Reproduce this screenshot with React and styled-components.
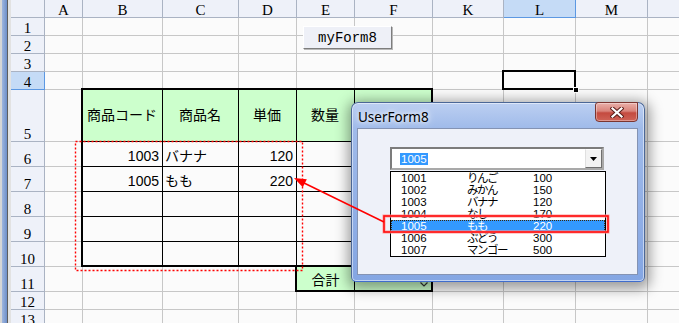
import React from 'react';
import styled, { createGlobalStyle, css } from 'styled-components';

const GlobalStyle = createGlobalStyle`
  *, *::before, *::after { box-sizing: border-box; }
  html, body { margin: 0; padding: 0; background: #fbfbfb; overflow: hidden; }
`;

const COLUMNS = ['A', 'B', 'C', 'D', 'E', 'F', 'K', 'L', 'M', ''];
const ROW_COUNT = 13;

// F5 sits under the dialog, so it stays empty here
const HEAD = ['商品コード', '商品名', '単価', '数量', ''];
const BODY = [
  ['1003', 'バナナ', '120', '', ''],
  ['1005', 'もも', '220', '', ''],
  ['', '', '', '', ''],
  ['', '', '', '', ''],
  ['', '', '', '', ''],
];
const ALIGN = ['right', 'left', 'right', 'right', 'right'];

const ITEMS = [
  ['1001', 'りんご', '100'],
  ['1002', 'みかん', '150'],
  ['1003', 'バナナ', '120'],
  ['1004', 'なし', '170'],
  ['1005', 'もも', '220'],
  ['1006', 'ぶどう', '300'],
  ['1007', 'マンゴー', '500'],
];

const Screen = styled.div`
  position: relative;
  width: 679px;
  height: 323px;
  overflow: hidden;
  display: flex;
  background: #fbfbfb;
  font-family: "Liberation Sans", "Noto Sans CJK JP", sans-serif;
  color: #000;
`;

const WindowEdge = styled.div`
  width: 11px;
  flex: none;
  background: linear-gradient(
    90deg,
    #d6d6d6 0,
    #d6d6d6 2px,
    #9fb6de 2px,
    #6e8fc9 7px,
    #5e5e5e 7px,
    #5e5e5e 8px,
    #e2e2e2 8px
  );
`;

const Sheet = styled.div`
  flex: 1;
  display: grid;
  grid-template-columns: 34px 38px 80px 76px 58px 58px 78px 71px 72px 72px 40px;
  grid-template-rows: repeat(5, 18px) 52px repeat(6, 25px) 18px 18px;
  align-content: start;
`;

const HeadCell = styled.div`
  display: flex;
  align-items: flex-end;
  justify-content: center;
  background: ${p => (p.$active ? '#c5dbf6' : '#eef1f9')};
  border-right: 1px solid ${p => (p.$active ? '#5c98e2' : '#aab3c3')};
  border-bottom: 1px solid ${p => (p.$active ? '#5c98e2' : '#aab3c3')};
  font: 15px/14px "Liberation Serif", serif;
`;

const Cell = styled.div`
  position: relative;
  border-right: 1px solid #c7c7c7;
  border-bottom: 1px solid #c7c7c7;
  background: #fbfbfb;

  ${p => p.$selected && css`
    z-index: 2;
    &::after {
      content: '';
      position: absolute;
      left: -2px;
      top: -2px;
      right: -1px;
      bottom: -1px;
      border: 2px solid #000;
    }
    &::before {
      content: '';
      position: absolute;
      right: -4px;
      bottom: -4px;
      width: 6px;
      height: 6px;
      background: #000;
      border: 1px solid #fff;
      z-index: 1;
    }
  `}
`;

const Table = styled.div`
  grid-column: 3 / 8;
  grid-row: 6 / 12;
  margin: -2px 0 0 -2px;
  border: 2px solid #000;
  display: grid;
  grid-template-columns: 80px 76px 58px 58px 1fr;
  grid-template-rows: 52px repeat(4, 25px) 1fr;
  background: #fbfbfb;
  z-index: 1;
`;

const justify = a => (a === 'right' ? 'flex-end' : a === 'center' ? 'center' : 'flex-start');

const TCell = styled.div`
  display: flex;
  align-items: ${p => (p.$head ? 'center' : 'flex-end')};
  justify-content: ${p => justify(p.$align)};
  padding: 0 3px 1px 2px;
  border-right: ${p => (p.$lastCol ? 'none' : '1px solid #000')};
  border-bottom: ${p => (p.$lastRow ? 'none' : '1px solid #000')};
  background: ${p => (p.$head ? '#ccffcc' : 'transparent')};
  font-size: 14px;
  line-height: 17px;
  white-space: nowrap;
`;

const TotalBox = styled.div`
  grid-column: 6 / 8;
  grid-row: 12 / 13;
  margin: -2px 0 0 -2px;
  border: 2px solid #000;
  display: grid;
  grid-template-columns: 58px 1fr;
  background: #ccffcc;
  z-index: 1;
`;

const TotalLabel = styled.div`
  display: flex;
  align-items: flex-end;
  justify-content: center;
  padding-bottom: 1px;
  border-right: 1px solid #000;
  font-size: 14px;
  line-height: 17px;
`;

const TotalValue = styled.div`
  display: flex;
  align-items: flex-end;
  justify-content: flex-end;
  padding: 0 3px 3px 0;
`;

const SheetButton = styled.div`
  position: absolute;
  left: 303px;
  top: 26px;
  width: 89px;
  height: 23px;
  display: flex;
  align-items: center;
  justify-content: center;
  background: #eef0f7;
  border: 1px solid;
  border-color: #ffffff #7d7d7d #7d7d7d #ffffff;
  box-shadow: 1px 1px 0 #b9b9b9;
  font: 14px "Liberation Mono", monospace;
  z-index: 3;
`;

const Dialog = styled.div`
  position: absolute;
  left: 351px;
  top: 102px;
  width: 294px;
  height: 180px;
  display: flex;
  flex-direction: column;
  border: 1px solid #4b6796;
  border-bottom-color: #3f6ccc;
  border-radius: 7px 7px 5px 5px;
  background: linear-gradient(180deg, #bccff1 0%, #a0bbea 14%, #91afe6 60%, #84a6e3 100%);
  box-shadow: inset 0 0 0 1px rgba(255, 255, 255, 0.5), 1px 3px 13px 4px rgba(0, 0, 0, 0.38);
  z-index: 5;
`;

const TitleBar = styled.div`
  height: 25px;
  flex: none;
  display: flex;
  align-items: center;
  justify-content: space-between;
  padding: 0 6px 0 6px;
`;

const Title = styled.span`
  font: 13.5px "Noto Sans", sans-serif;
  color: #000;
  padding-top: 3px;
  text-shadow: 0 0 4px #fff, 0 0 8px rgba(255, 255, 255, 0.9);
`;

const CloseButton = styled.div`
  align-self: flex-start;
  margin-top: -1px;
  width: 43px;
  height: 20px;
  display: flex;
  align-items: center;
  justify-content: center;
  border: 1px solid #7b3530;
  border-radius: 3px 0 4px 4px;
  background: linear-gradient(180deg, #eab0a9 0%, #d9837a 45%, #c44a3f 55%, #cf6357 100%);
  box-shadow: inset 0 0 0 1px rgba(255, 255, 255, 0.35);
`;

const Client = styled.div`
  flex: 1;
  margin: 0 6px 6px 5px;
  padding: 18px 0 0 32px;
  background: #eef1f9;
  border: 1px solid #8493b3;
  display: flex;
  flex-direction: column;
`;

const Combo = styled.div`
  width: 214px;
  height: 23px;
  display: flex;
  align-items: center;
  background: #fff;
  border: 2px solid;
  border-color: #7c7c7c #a9a9a9 #a9a9a9 #7c7c7c;
`;

const ComboText = styled.div`
  flex: 1;
  padding-left: 8px;
  font-size: 11.5px;
  line-height: 12px;
`;

const Highlight = styled.span`
  background: #3399ff;
  color: #fff;
  padding: 0 1px;
`;

const DropButton = styled.div`
  width: 17px;
  height: 100%;
  display: flex;
  align-items: center;
  justify-content: center;
  background: #f3f3f3;
  border: 1px solid;
  border-color: #ffffff #6f6f6f #6f6f6f #e0e0e0;
`;

const ListBox = styled.div`
  width: 216px;
  margin-top: 1px;
  border: 1px solid #000;
  background: #fff;
`;

const ListRow = styled.div`
  position: relative;
  display: grid;
  grid-template-columns: 66px 66px 1fr;
  height: 12px;
  padding-left: 10px;
  font-size: 11.5px;
  line-height: 12px;
  background: ${p => (p.$selected ? '#3399ff' : 'transparent')};
  color: ${p => (p.$selected ? '#fff' : '#000')};

  ${p => p.$selected && css`
    &::after {
      content: '';
      position: absolute;
      inset: 0;
      border: 1px dotted #3a2a10;
    }
  `}
`;

const ItemName = styled.span`
  letter-spacing: -1.5px;
  font-size: 11.5px;
`;

const Annotations = styled.svg`
  position: absolute;
  left: 0;
  top: 0;
  width: 679px;
  height: 323px;
  pointer-events: none;
  z-index: 10;
`;

const SheetCells = () => {
  const cells = [];
  cells.push(<HeadCell key="corner" />);
  COLUMNS.forEach(c => cells.push(<HeadCell key={'h' + c} $active={c === 'L'}>{c}</HeadCell>));
  for (let r = 1; r <= ROW_COUNT; r++) {
    cells.push(<HeadCell key={'r' + r} $active={r === 4}>{r}</HeadCell>);
    COLUMNS.forEach((c, i) => {
      const inTable = r >= 5 && r <= 10 && i >= 1 && i <= 5;
      const inTotal = r === 11 && (i === 4 || i === 5);
      if (inTable || inTotal) return;
      cells.push(<Cell key={c + r + i} $selected={c === 'L' && r === 4} />);
    });
  }
  return cells;
};

const App = () => {
  return (
    <Screen>
      <GlobalStyle />
      <WindowEdge />
      <Sheet>
        <SheetCells />
        <Table>
          {HEAD.map((h, i) => (
            <TCell key={'th' + i} $head $align="center" $lastCol={i === 4}>{h}</TCell>
          ))}
          {BODY.map((row, r) =>
            row.map((v, i) => (
              <TCell
                key={r + '-' + i}
                $align={ALIGN[i]}
                $lastCol={i === 4}
                $lastRow={r === BODY.length - 1}
              >
                {v}
              </TCell>
            ))
          )}
        </Table>
        <TotalBox>
          <TotalLabel>合計</TotalLabel>
          <TotalValue>
            <svg width="8" height="5" viewBox="0 0 8 5">
              <path d="M0.5 0.5 L4 4 L7.5 0.5" fill="none" stroke="#333" strokeWidth="1.2" />
            </svg>
          </TotalValue>
        </TotalBox>
      </Sheet>

      <SheetButton>myForm8</SheetButton>

      <Dialog>
        <TitleBar>
          <Title>UserForm8</Title>
          <CloseButton>
            <svg width="14" height="11" viewBox="0 0 14 11">
              <path d="M2.5 1.5 L11.5 9.5 M11.5 1.5 L2.5 9.5" stroke="#5a1e19" strokeWidth="4.2" strokeLinecap="square" />
              <path d="M2.5 1.5 L11.5 9.5 M11.5 1.5 L2.5 9.5" stroke="#fff" strokeWidth="2.2" strokeLinecap="square" />
            </svg>
          </CloseButton>
        </TitleBar>
        <Client>
          <Combo>
            <ComboText>
              <Highlight>1005</Highlight>
            </ComboText>
            <DropButton>
              <svg width="7" height="4" viewBox="0 0 7 4">
                <path d="M0 0 H7 L3.5 4 Z" fill="#000" />
              </svg>
            </DropButton>
          </Combo>
          <ListBox>
            {ITEMS.map(([code, name, price]) => (
              <ListRow key={code} $selected={code === '1005'}>
                <span>{code}</span>
                <ItemName>{name}</ItemName>
                <span>{price}</span>
              </ListRow>
            ))}
          </ListBox>
        </Client>
      </Dialog>

      <Annotations viewBox="0 0 679 323">
        <rect x="75.5" y="141.5" width="227" height="129" fill="none" stroke="#ff0000" strokeWidth="1.4" strokeDasharray="2 2" />
        <rect x="384" y="216" width="224" height="16" fill="none" stroke="#ff9a9a" strokeWidth="3" />
        <rect x="384" y="216" width="224" height="16" fill="none" stroke="#ff1010" strokeWidth="1.6" />
        <line x1="384" y1="222" x2="303" y2="182.5" stroke="#ff0000" strokeWidth="1.5" />
        <polygon points="294,178 306.8,179.3 302.8,187.3" fill="#ff0000" />
      </Annotations>
    </Screen>
  );
};

export default App;
